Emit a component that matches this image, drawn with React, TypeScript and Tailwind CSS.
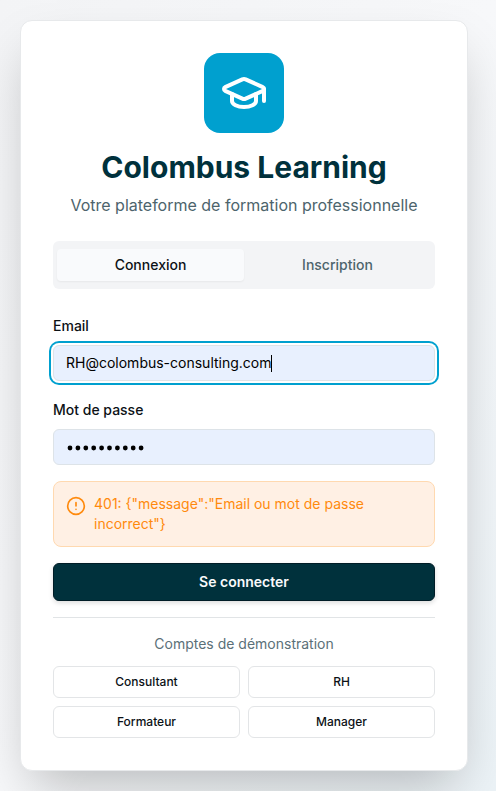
import { CircleAlert, GraduationCap } from "lucide-react";

const demoAccounts = ["Consultant", "RH", "Formateur", "Manager"];

const errorMessage = '401: {"message":"Email ou mot de passe incorrect"}';

export default function App() {
  return (
    <div className="flex h-[791px] w-[496px] justify-center overflow-hidden bg-linear-to-br from-[#f3f4f6] via-[#f7f8fa] to-[#ecf3f7] pr-2 pt-5 font-['Inter',sans-serif] text-[#0c1116]">
      <main className="h-[751px] w-[448px] shrink-0 rounded-xl border border-[#e7e9eb] bg-white p-8 shadow-2xl">
        <header className="mb-6 flex flex-col items-center text-center">
          <div className="mb-4 flex size-20 items-center justify-center rounded-2xl bg-[#00a0cf] text-white">
            <GraduationCap className="size-12" strokeWidth={2} />
          </div>
          <h1 className="text-3xl font-bold leading-9 text-[#00313c]">Colombus Learning</h1>
          <p className="mt-2 text-base text-[#4d646c]">Votre plateforme de formation professionnelle</p>
        </header>

        <div className="grid h-12 grid-cols-2 items-center rounded-md bg-[#f3f4f6] p-1 text-center text-sm font-medium">
          <button className="rounded-sm bg-[#f9fafc] py-1.5 shadow-xs">Connexion</button>
          <button className="py-1.5 text-[#4d646c]">Inscription</button>
        </div>

        <form className="mt-6 space-y-4">
          <div className="space-y-2">
            <div className="flex h-6 items-center pt-0.5 text-sm font-medium">Email</div>
            <div className="flex h-9 items-center rounded-md border border-[#dde3e8] bg-[#e8f0fe] px-3 text-sm text-black ring-2 ring-[#00a0cf] ring-offset-2">
              <span>RH@colombus-consulting.com</span>
              <span className="-ml-px h-[17px] w-px bg-black" />
            </div>
          </div>
          <div className="space-y-2">
            <div className="flex h-6 items-center pt-0.5 text-sm font-medium">Mot de passe</div>
            <div className="flex h-9 items-center rounded-md border border-[#dde3e8] bg-[#e8f0fe] pl-3">
              <svg className="h-5 w-20" viewBox="0 0 80 20" fill="black" aria-hidden="true">
                {Array.from({ length: 10 }, (_, i) => (
                  <circle key={i} cx={4 + i * 7.9} cy={11} r={2.4} />
                ))}
              </svg>
            </div>
          </div>
          <div className="flex h-[66px] gap-2 rounded-lg border border-[#ffd9b0] bg-[#fff0e4] p-3 text-sm text-[#ff8a0d]">
            <CircleAlert className="mt-0.5 size-5 shrink-0" />
            <p>{errorMessage}</p>
          </div>
          <button type="button" className="flex h-[38px] w-full items-center justify-center rounded-md border border-[#001c26] bg-[#00313c] text-sm font-semibold text-[#f9fafb] shadow-[0_2px_5px_rgba(0,0,0,0.14)]">
            Se connecter
          </button>
        </form>

        <section className="mt-4 border-t border-[#e1e4e6] pt-4">
          <p className="mb-3 text-center text-sm text-[#5b7078]">Comptes de démonstration</p>
          <div className="grid grid-cols-2 gap-2">
            {demoAccounts.map((account) => (
              <button key={account} className="h-8 rounded-md border border-[#e3e5e7] text-xs font-medium">
                {account}
              </button>
            ))}
          </div>
        </section>
      </main>
    </div>
  );
}
